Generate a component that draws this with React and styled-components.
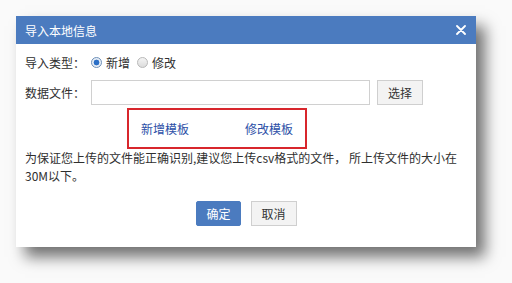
import React from "react";
import styled, { createGlobalStyle } from "styled-components";

const Global = createGlobalStyle`
  html, body { margin: 0; padding: 0; background: #fafafa; }
  body { font-family: "Noto Sans CJK SC", "Microsoft YaHei", sans-serif; font-size: 12px; color: #2f2f2f; }
`;

const Page = styled.div`
  width: 512px;
  height: 283px;
  padding: 16px 0 0 16px;
  box-sizing: border-box;
`;

const Dialog = styled.div`
  width: 460px;
  height: 231px;
  background: #fff;
  box-shadow: 9px 10px 14px rgba(0, 0, 0, 0.55);
  display: flex;
  flex-direction: column;
`;

const Header = styled.div`
  height: 28px;
  background: #4b7bbf;
  color: #fff;
  display: flex;
  align-items: center;
  justify-content: space-between;
  padding: 0 10px 0 9px;
  font-size: 12px;
`;

const Close = styled.svg`
  width: 10px;
  height: 10px;
`;

const Body = styled.div`
  padding: 6px 9px 0 9px;
  display: flex;
  flex-direction: column;
`;

const Row = styled.div`
  display: flex;
  align-items: center;
  height: ${(p) => p.$h || 24}px;
  margin-bottom: ${(p) => p.$mb || 0}px;
`;

const Label = styled.span`
  width: 60px;
  margin-right: 6px;
  white-space: nowrap;
`;

const RadioItem = styled.label`
  display: flex;
  align-items: center;
  gap: 4px;
  margin-right: 7px;
`;

const RadioDot = styled.span`
  width: 9px;
  height: 9px;
  border-radius: 50%;
  border: 1px solid ${(p) => (p.$on ? "#6d8fb8" : "#b8b8b8")};
  background: ${(p) => (p.$on ? "radial-gradient(circle, #2a6fc7 0 2.6px, #e8eef6 3.2px)" : "linear-gradient(#f4f4f4, #dcdcdc)")};
`;

const Input = styled.div`
  width: 277px;
  height: 23px;
  border: 1px solid #d0d0d0;
  background: #fff;
`;

const Button = styled.div`
  height: ${(p) => p.$h || 23}px;
  padding: 0 ${(p) => p.$px || 11}px;
  display: flex;
  align-items: center;
  justify-content: center;
  border: 1px solid ${(p) => (p.$primary ? "#4b7bbf" : "#cfcfcf")};
  background: ${(p) => (p.$primary ? "#4b7bbf" : "#f3f3f3")};
  color: ${(p) => (p.$primary ? "#fff" : "#333")};
  border-radius: ${(p) => (p.$primary ? 2 : 0)}px;
  margin-left: ${(p) => p.$ml || 0}px;
`;

const TemplateBox = styled.div`
  box-sizing: border-box;
  margin: 3px 0 0 102px;
  width: 180px;
  height: 41px;
  border: 2px solid #d8262c;
  display: flex;
  align-items: center;
  padding-left: 12px;
  gap: 56px;
`;

const Link = styled.a`
  color: #2c4fa7;
  text-decoration: none;
`;

const Note = styled.p`
  margin: 0;
  line-height: 18px;
`;

const Footer = styled.div`
  display: flex;
  justify-content: center;
  margin-top: 16px;
  padding-left: 1px;
`;

export default function App() {
  return (
    <>
      <Global />
      <Page>
        <Dialog>
          <Header>
            <span>导入本地信息</span>
            <Close viewBox="0 0 10 10">
              <path d="M1 1 L9 9 M9 1 L1 9" stroke="#fff" strokeWidth="1.8" strokeLinecap="round" />
            </Close>
          </Header>
          <Body>
            <Row $mb={6}>
              <Label>导入类型：</Label>
              <RadioItem>
                <RadioDot $on />
                新增
              </RadioItem>
              <RadioItem>
                <RadioDot />
                修改
              </RadioItem>
            </Row>
            <Row $h={25}>
              <Label>数据文件：</Label>
              <Input />
              <Button $ml={7} $px={10}>选择</Button>
            </Row>
            <TemplateBox>
              <Link href="#">新增模板</Link>
              <Link href="#">修改模板</Link>
            </TemplateBox>
            <Note>为保证您上传的文件能正确识别,建议您上传csv格式的文件， 所上传文件的大小在30M以下。</Note>
            <Footer>
              <Button $primary $px={9}>确定</Button>
              <Button $ml={10} $px={10}>取消</Button>
            </Footer>
          </Body>
        </Dialog>
      </Page>
    </>
  );
}
